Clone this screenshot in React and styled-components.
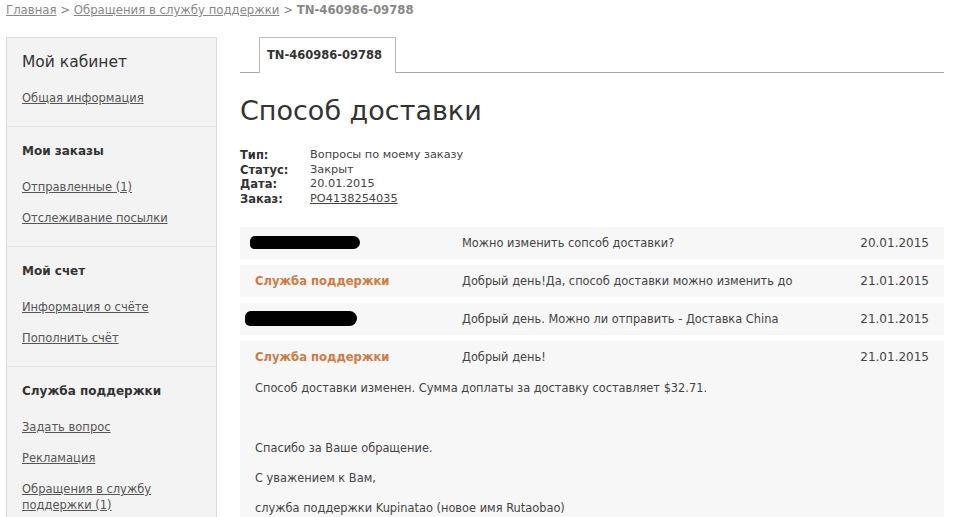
import styled, { createGlobalStyle } from "styled-components";

const GlobalStyle = createGlobalStyle`
  body {
    margin: 0;
    background: #fff;
    font-family: "DejaVu Sans", Verdana, sans-serif;
    color: #444;
  }
`;

const menu = [
  { title: "Мой кабинет", big: true, links: ["Общая информация"] },
  { title: "Мои заказы", links: ["Отправленные (1)", "Отслеживание посылки"] },
  { title: "Мой счет", links: ["Информация о счёте", "Пополнить счёт"] },
  {
    title: "Служба поддержки",
    links: ["Задать вопрос", "Рекламация", "Обращения в службу поддержки (1)"],
  },
];

const info = [
  { label: "Тип:", value: "Вопросы по моему заказу" },
  { label: "Статус:", value: "Закрыт" },
  { label: "Дата:", value: "20.01.2015" },
  { label: "Заказ:", value: "PO4138254035", link: true },
];

const messages = [
  { hidden: { w: 110, h: 13, shift: -5 }, text: "Можно изменить сопсоб доставки?", date: "20.01.2015" },
  { support: true, text: "Добрый день!Да, способ доставки можно изменить до", date: "21.01.2015" },
  { hidden: { w: 112, h: 15, shift: -10 }, text: "Добрый день. Можно ли отправить - Доставка China", date: "21.01.2015" },
  {
    support: true,
    text: "Добрый день!",
    date: "21.01.2015",
    body: [
      "Способ доставки изменен. Сумма доплаты за доставку составляет $32.71.",
      "",
      "Спасибо за Ваше обращение.",
      "С уважением к Вам,",
      "служба поддержки Kupinatao (новое имя Rutaobao)",
    ],
  },
];

const App = () => {
  return (
    <>
      <GlobalStyle />
      <Page>
        <Breadcrumbs>
          <Crumb href="#">Главная</Crumb> &gt;{" "}
          <Crumb href="#">Обращения в службу поддержки</Crumb> &gt;{" "}
          <Current>TN-460986-09788</Current>
        </Breadcrumbs>
        <Layout>
          <Sidebar>
            {menu.map((section) => (
              <Section key={section.title}>
                <SectionTitle big={section.big}>{section.title}</SectionTitle>
                <Links>
                  {section.links.map((l) => (
                    <SideLink key={l} href="#">
                      {l}
                    </SideLink>
                  ))}
                </Links>
              </Section>
            ))}
          </Sidebar>
          <Main>
            <TabBar>
              <Tab>TN-460986-09788</Tab>
            </TabBar>
            <Title>Способ доставки</Title>
            <InfoTable>
              {info.map((row) => (
                <InfoRow key={row.label}>
                  <InfoLabel>{row.label}</InfoLabel>
                  {row.link ? <InfoLink href="#">{row.value}</InfoLink> : <span>{row.value}</span>}
                </InfoRow>
              ))}
            </InfoTable>
            <Thread>
              {messages.map((m, i) => (
                <Message key={i}>
                  <MessageHead>
                    {m.support ? (
                      <Author>Служба поддержки</Author>
                    ) : (
                      <div>
                        <Redacted w={m.hidden.w} h={m.hidden.h} shift={m.hidden.shift} />
                      </div>
                    )}
                    <Preview>{m.text}</Preview>
                    <Date>{m.date}</Date>
                  </MessageHead>
                  {m.body && (
                    <MessageBody>
                      {m.body.map((line, j) => (
                        <Line key={j}>{line}</Line>
                      ))}
                    </MessageBody>
                  )}
                </Message>
              ))}
            </Thread>
          </Main>
        </Layout>
      </Page>
    </>
  );
};

const Page = styled.div`
  padding: 2px 16px 0 6px;
  height: 517px;
  overflow: hidden;
  box-sizing: border-box;
`;

const Breadcrumbs = styled.div`
  font-size: 11.7px;
  line-height: 16px;
  color: #888;
`;

const Crumb = styled.a`
  color: #888;
  text-decoration: underline;
`;

const Current = styled.b`
  color: #888;
`;

const Layout = styled.div`
  display: grid;
  grid-template-columns: 211px 1fr;
  column-gap: 23px;
  margin-top: 19px;
  align-items: start;
`;

const Sidebar = styled.div`
  background: #f3f3f3;
  border: 1px solid #dcdcdc;
  min-height: 520px;
`;

const Section = styled.div`
  padding: 16px 15px 20px;
  border-bottom: 1px solid #e2e2e2;

  &:last-child {
    border-bottom: none;
  }
`;

const SectionTitle = styled.div`
  font-size: ${(p) => (p.big ? "15.5px" : "12px")};
  font-weight: ${(p) => (p.big ? "normal" : "bold")};
  line-height: 16px;
  color: #333;
  margin-bottom: 20px;
`;

const Links = styled.div`
  display: flex;
  flex-direction: column;
  gap: 15px;
`;

const SideLink = styled.a`
  font-size: 11.5px;
  line-height: 16px;
  color: #555;
  text-decoration: underline;
`;

const Main = styled.div`
  display: flex;
  flex-direction: column;
`;

const TabBar = styled.div`
  display: flex;
  padding-left: 19px;
  border-bottom: 1px solid #aaa;
`;

const Tab = styled.div`
  height: 35px;
  line-height: 35px;
  padding: 0 13px 0 7px;
  border: 1px solid #bbb;
  border-bottom: none;
  margin-bottom: -1px;
  background: #fff;
  font-size: 11.5px;
  font-weight: bold;
  color: #333;
`;

const Title = styled.h1`
  margin: 18px 0 0;
  font-size: 27px;
  font-weight: normal;
  line-height: 40px;
  color: #333;
`;

const InfoTable = styled.div`
  margin-top: 17px;
  display: flex;
  flex-direction: column;
`;

const InfoRow = styled.div`
  display: grid;
  grid-template-columns: 70px 1fr;
  font-size: 11.3px;
  line-height: 14.7px;
  color: #444;
`;

const InfoLabel = styled.b`
  color: #333;
  font-size: 11.5px;
`;

const InfoLink = styled.a`
  color: #444;
  text-decoration: underline;
  justify-self: start;
`;

const Thread = styled.div`
  margin-top: 20px;
  display: flex;
  flex-direction: column;
  gap: 6px;
`;

const Message = styled.div`
  background: #f7f7f7;
`;

const MessageHead = styled.div`
  display: grid;
  grid-template-columns: 207px 1fr auto;
  align-items: center;
  height: 32px;
  padding: 0 15px;
  font-size: 11.4px;
  color: #444;
`;

const Author = styled.div`
  font-weight: bold;
  font-size: 11.6px;
  color: #d47a3e;
`;

const Redacted = styled.span`
  display: block;
  width: ${(p) => p.w}px;
  height: ${(p) => p.h}px;
  margin-left: ${(p) => p.shift}px;
  background: #000;
  border-radius: 7px 9px 9px 6px;
`;

const Preview = styled.div`
  white-space: nowrap;
  overflow: hidden;
`;

const Date = styled.div`
  font-size: 12px;
  color: #444;
`;

const MessageBody = styled.div`
  padding: 0 15px 10px;
  font-size: 11.4px;
  color: #444;
`;

const Line = styled.div`
  line-height: 30px;
  min-height: 30px;
`;

export default App;
